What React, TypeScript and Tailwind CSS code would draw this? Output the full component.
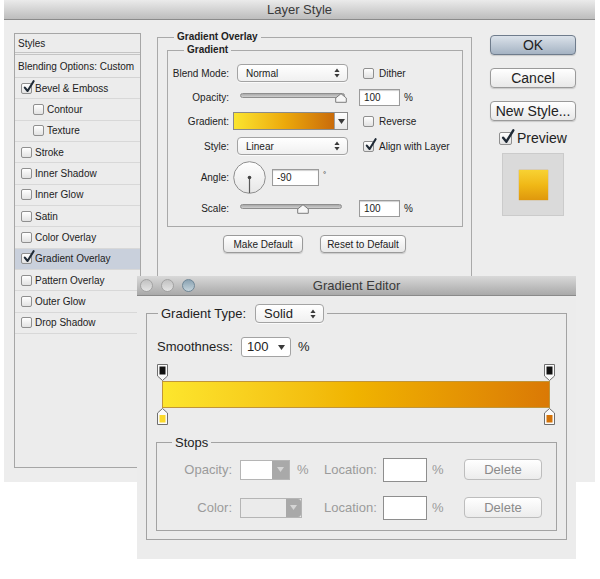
import React from "react";

const Check = ({ checked = false, big = false }: { checked?: boolean; big?: boolean }) => (
  <span
    className={`relative inline-block shrink-0 rounded-[2px] border border-[#8f8f8f] bg-linear-to-b from-white to-[#e2e2e2] ${
      big ? "w-[13px] h-[13px]" : "w-[11px] h-[11px]"
    }`}
  >
    {checked && (
      <svg
        className="absolute -top-[4px] left-[1px]"
        width={big ? 14 : 12}
        height={big ? 15 : 13}
        viewBox="0 0 12 13"
      >
        <path
          d="M1.8 7.6 L4.6 11 L10.6 1.2"
          fill="none"
          stroke="#1f2a36"
          strokeWidth="2.1"
          strokeLinecap="round"
          strokeLinejoin="round"
        />
      </svg>
    )}
  </span>
);

const UpDown = () => (
  <svg width="6" height="10" viewBox="0 0 6 10">
    <path d="M3 0.5 L5.6 4 H0.4 Z M3 9.5 L5.6 6 H0.4 Z" fill="#3a3a3a" />
  </svg>
);

const Down = ({ color = "#3a3a3a" }: { color?: string }) => (
  <svg width="7" height="5" viewBox="0 0 7 5">
    <path d="M0 0 H7 L3.5 5 Z" fill={color} />
  </svg>
);

const Select = ({ value, w }: { value: string; w: string }) => (
  <div
    className={`${w} h-full flex items-center justify-between pl-[8px] pr-[7px] rounded-[4px] border border-[#a3a3a3] bg-linear-to-b from-white to-[#f0f0f0] shadow-[0_1px_0_#fafafa]`}
  >
    <span>{value}</span>
    <UpDown />
  </div>
);

const Slider = ({ w, thumb }: { w: string; thumb: number }) => (
  <div className={`relative ${w} h-[5px] rounded-full border border-[#8e8e8e] bg-linear-to-b from-[#a9a9a9] to-[#cfcfcf]`}>
    <svg
      className="absolute top-[-1px]"
      style={{ left: thumb - 6 }}
      width="12"
      height="10"
      viewBox="0 0 12 10"
    >
      <path d="M6 0.7 L11.3 5 V9.3 H0.7 V5 Z" fill="#f6f6f6" stroke="#7d7d7d" strokeWidth="1" />
    </svg>
  </div>
);

const Field = ({ value, w }: { value: string; w: string }) => (
  <div className={`${w} h-full flex items-center pl-[4px] border border-[#9b9b9b] bg-white shadow-[inset_0_1px_1px_#d0d0d0]`}>
    {value}
  </div>
);

const Btn = ({ label, w, h, ok = false, text = "text-[13px]" }: { label: string; w: string; h: string; ok?: boolean; text?: string }) => (
  <div
    className={`${w} ${h} ${text} flex items-center justify-center rounded-[4px] border shadow-[0_1px_1px_#c9c9c9] ${
      ok
        ? "border-[#6f7c8c] bg-linear-to-b from-[#dbe2ea] to-[#a5b3c3]"
        : "border-[#9a9a9a] bg-linear-to-b from-white to-[#e8e8e8]"
    }`}
  >
    {label}
  </div>
);

const styleRows = [
  { label: "Bevel & Emboss", checked: true },
  { label: "Contour", indent: true },
  { label: "Texture", indent: true },
  { label: "Stroke" },
  { label: "Inner Shadow" },
  { label: "Inner Glow" },
  { label: "Satin" },
  { label: "Color Overlay" },
  { label: "Gradient Overlay", checked: true, active: true },
  { label: "Pattern Overlay" },
  { label: "Outer Glow" },
  { label: "Drop Shadow" },
];

const StylesList = () => (
  <div className="mt-[2px] w-[127px] h-[435px] shrink-0 border border-[#a6a6a6] bg-[#ececec] flex flex-col text-[10px]">
    <div className="h-[21px] flex items-center pl-[3px] border-b-[3px] border-double border-[#c4c4c4]">Styles</div>
    <div className="h-[23px] flex items-center pl-[3px] border-b border-[#d3d3d3]">Blending Options: Custom</div>
    {styleRows.map((r) => (
      <div
        key={r.label}
        className={`h-[21.35px] flex items-center gap-[3px] border-b border-[#d8d8d8] ${r.indent ? "pl-[18px]" : "pl-[6px]"} ${
          r.active ? "bg-[#c9d0dc]" : ""
        }`}
      >
        <Check checked={r.checked} />
        <span>{r.label}</span>
      </div>
    ))}
  </div>
);

const Label = ({ children }: { children: React.ReactNode }) => (
  <span className="w-[61px] shrink-0 text-right">{children}</span>
);

const OverlayGroup = () => (
  <fieldset className="ml-[16px] w-[315px] h-[440px] shrink-0 border border-[#a9a9a9] text-[10px]">
    <legend className="ml-[16px] px-[3px] font-bold leading-[12px]">Gradient Overlay</legend>
    <fieldset className="ml-[9px] mt-[1px] w-[296px] border border-[#a9a9a9] pb-[9px]">
      <legend className="ml-[16px] px-[3px] font-bold leading-[12px]">Gradient</legend>
      <div className="flex flex-col pt-[8px]">
        <div className="h-[18px] flex items-center gap-[8px]">
          <Label>Blend Mode:</Label>
          <Select value="Normal" w="w-[111px]" />
          <div className="ml-[7px] flex items-center gap-[5px]">
            <Check />
            <span>Dither</span>
          </div>
        </div>
        <div className="mt-[7px] h-[17px] flex items-center gap-[8px]">
          <Label>Opacity:</Label>
          <div className="ml-[3px] -mt-[4px]">
            <Slider w="w-[105px]" thumb={100} />
          </div>
          <div className="ml-[6px] h-full">
            <Field value="100" w="w-[41px]" />
          </div>
          <span className="-ml-[4px]">%</span>
        </div>
        <div className="mt-[6px] h-[18px] flex items-center gap-[8px]">
          <Label>Gradient:</Label>
          <div className="-ml-[4px] w-[115px] h-full flex border border-[#8a8a8a]">
            <div className="flex-1 bg-linear-to-r from-[#fbe52e] via-[#ecaa0b] to-[#c96b0a]" />
            <div className="w-[13px] flex items-center justify-center border-l border-[#a0a0a0] bg-linear-to-b from-white to-[#e8e8e8]">
              <Down />
            </div>
          </div>
          <div className="ml-[7px] flex items-center gap-[5px]">
            <Check />
            <span>Reverse</span>
          </div>
        </div>
        <div className="mt-[7px] h-[18px] flex items-center gap-[8px]">
          <Label>Style:</Label>
          <Select value="Linear" w="w-[111px]" />
          <div className="ml-[7px] flex items-center gap-[5px]">
            <Check checked />
            <span>Align with Layer</span>
          </div>
        </div>
        <div className="mt-[6px] h-[33px] flex items-center gap-[8px]">
          <Label>Angle:</Label>
          <svg className="-ml-[4px]" width="33" height="33" viewBox="0 0 33 33">
            <defs>
              <linearGradient id="dial" x1="0" y1="0" x2="0" y2="1">
                <stop offset="0" stopColor="#ffffff" />
                <stop offset="1" stopColor="#e6e6e6" />
              </linearGradient>
            </defs>
            <circle cx="16.5" cy="16.5" r="15.8" fill="url(#dial)" stroke="#8e8e8e" />
            <line x1="16.5" y1="16.5" x2="16.5" y2="32" stroke="#5a5a5a" strokeWidth="1.2" />
            <circle cx="16.5" cy="16.5" r="1.8" fill="#444" />
          </svg>
          <div className="-ml-[2px] h-[17px]">
            <Field value="-90" w="w-[47px]" />
          </div>
          <span className="-ml-[4px] -mt-[6px] text-[8px]">°</span>
        </div>
        <div className="mt-[6px] h-[17px] flex items-center gap-[8px]">
          <Label>Scale:</Label>
          <div className="ml-[3px] -mt-[4px]">
            <Slider w="w-[102px]" thumb={62} />
          </div>
          <div className="ml-[9px] h-full">
            <Field value="100" w="w-[41px]" />
          </div>
          <span className="-ml-[4px]">%</span>
        </div>
      </div>
    </fieldset>
    <div className="mt-[8px] flex justify-center gap-[17px]">
      <Btn label="Make Default" w="w-[80px]" h="h-[18px]" text="text-[10px]" />
      <Btn label="Reset to Default" w="w-[86px]" h="h-[18px]" text="text-[10px]" />
    </div>
  </fieldset>
);

const RightColumn = () => (
  <div className="ml-[18px] w-[86px] flex flex-col">
    <div className="mt-[4px]">
      <Btn label="OK" w="w-[86px]" h="h-[20px]" ok text="text-[14px]" />
    </div>
    <div className="mt-[13px]">
      <Btn label="Cancel" w="w-[86px]" h="h-[20px]" text="text-[14px]" />
    </div>
    <div className="mt-[13px]">
      <Btn label="New Style..." w="w-[86px]" h="h-[20px]" text="text-[14px]" />
    </div>
    <div className="mt-[9px] h-[16px] pl-[9px] flex items-center gap-[5px] text-[14px]">
      <Check checked big />
      <span>Preview</span>
    </div>
    <div className="mt-[7px] ml-[12px] w-[62px] h-[63px] flex items-center justify-center bg-[#dadada] border border-[#cbcbcb]">
      <div className="w-[29px] h-[30px] bg-linear-to-b from-[#f8d232] via-[#f0b816] to-[#df980d] shadow-[0_0_1px_#c98a10]" />
    </div>
  </div>
);

const LayerStyle = () => (
  <div className="absolute left-[4px] top-0 w-[591px] h-[482px] bg-[#ededed] flex flex-col">
    <div className="h-[20px] shrink-0 flex items-center justify-center bg-linear-to-b from-[#ebebeb] to-[#bdbdbd] border-b border-[#8b8b8b] text-[13px] text-[#3a3a3a]">
      Layer Style
    </div>
    <div className="flex items-start pl-[10px] pt-[11px]">
      <StylesList />
      <OverlayGroup />
      <RightColumn />
    </div>
  </div>
);

const TopStop = () => (
  <svg width="11" height="17" viewBox="0 0 11 17">
    <path d="M0.5 0.5 H10.5 V12 L5.5 16.5 L0.5 12 Z" fill="#fafafa" stroke="#6f6f6f" />
    <rect x="2.5" y="2.5" width="6" height="8" fill="#111" />
  </svg>
);

const BottomStop = ({ color }: { color: string }) => (
  <svg width="11" height="17" viewBox="0 0 11 17">
    <path d="M5.5 0.5 L10.5 5 V16.5 H0.5 V5 Z" fill="#fafafa" stroke="#6f6f6f" />
    <rect x="2.5" y="7" width="6" height="7.5" fill={color} />
  </svg>
);

const StopRow = ({ label, first }: { label: string; first?: boolean }) => (
  <div className={`h-[23px] flex items-center ${first ? "mt-[8px]" : "mt-[15px]"}`}>
    <span className="w-[75px] text-right">{label}</span>
    <div className="ml-[8px] w-[84px] flex items-center">
      {first ? (
        <>
          <div className="w-[50px] h-[20px] flex border border-[#b5b5b5]">
            <div className="flex-1 bg-white" />
            <div className="w-[17px] flex items-center justify-center bg-[#a9a9a9]">
              <Down color="#d5d5d5" />
            </div>
          </div>
          <span className="ml-[7px]">%</span>
        </>
      ) : (
        <div className="w-[62px] h-[20px] flex border border-[#b5b5b5]">
          <div className="flex-1 bg-[#ebebeb]" />
          <div className="w-[15px] flex items-center justify-center bg-[#a9a9a9] rounded-r-[3px]">
            <Down color="#d5d5d5" />
          </div>
        </div>
      )}
    </div>
    <span className="w-[59px]">Location:</span>
    <div className="w-[44px] h-[24px] border border-[#8e8e8e] bg-white" />
    <span className="w-[37px] pl-[5px]">%</span>
    <div className="w-[78px] h-[21px] flex items-center justify-center rounded-[4px] border border-[#bdbdbd] bg-linear-to-b from-white to-[#ececec] text-[#8a8a8a]">
      Delete
    </div>
  </div>
);

const GradientEditor = () => (
  <div className="absolute left-[137px] top-[276px] w-[439px] h-[283px] bg-[#ececec] flex flex-col text-[13px]">
    <div className="h-[20px] shrink-0 flex items-center bg-linear-to-b from-[#d9d9d9] to-[#a9a9a9] border-b border-[#8a8a8a]">
      <div className="w-[58px] pl-[3px] flex gap-[8px]">
        <span className="w-[13px] h-[13px] rounded-full border border-[#a2a2a2] bg-linear-to-b from-[#c2c2c2] to-[#e4e4e4]" />
        <span className="w-[13px] h-[13px] rounded-full border border-[#a2a2a2] bg-linear-to-b from-[#c2c2c2] to-[#e4e4e4]" />
        <span className="w-[13px] h-[13px] rounded-full border border-[#6f8797] bg-linear-to-b from-[#8aa2b2] to-[#c5d4dc]" />
      </div>
      <div className="flex-1 text-center text-[#3a3a3a]">Gradient Editor</div>
      <div className="w-[58px]" />
    </div>
    <div className="pl-[9px] pt-[8px]">
      <fieldset className="w-[421px] h-[236px] border border-[#a3a3a3]">
        <legend className="ml-[11px] px-[3px]">
          <div className="flex items-center h-[19px]">
            <span>Gradient Type:</span>
            <div className="ml-[9px] h-[19px]">
              <Select value="Solid" w="w-[69px]" />
            </div>
          </div>
        </legend>
        <div className="mt-[14px] pl-[10px] h-[20px] flex items-center">
          <span>Smoothness:</span>
          <div className="ml-[8px] w-[50px] h-[20px] flex items-center justify-between pl-[5px] pr-[5px] border border-[#a3a3a3] rounded-[3px] bg-white">
            <span>100</span>
            <Down />
          </div>
          <span className="ml-[7px]">%</span>
        </div>
        <div className="mt-[7px] ml-[15px] w-[388px] flex flex-col">
          <div className="-mx-[5px] flex justify-between">
            <TopStop />
            <TopStop />
          </div>
          <div className="h-[27px] border border-[#c0953a] bg-linear-to-r from-[#fde62d] via-[#f0b300] to-[#da7905]" />
          <div className="-mx-[5px] flex justify-between">
            <BottomStop color="#fbd92a" />
            <BottomStop color="#d37309" />
          </div>
        </div>
        <fieldset className="mt-[10px] ml-[9px] w-[401px] border border-[#a3a3a3] pb-[11px] text-[#9b9b9b]">
          <legend className="ml-[15px] px-[3px] text-[#222] leading-[15px]">Stops</legend>
          <StopRow label="Opacity:" first />
          <StopRow label="Color:" />
        </fieldset>
      </fieldset>
    </div>
  </div>
);

export default function App() {
  return (
    <div className="relative w-[600px] h-[579px] overflow-hidden bg-white text-[#222] font-['Liberation_Sans',Arial,sans-serif]">
      <LayerStyle />
      <GradientEditor />
    </div>
  );
}
